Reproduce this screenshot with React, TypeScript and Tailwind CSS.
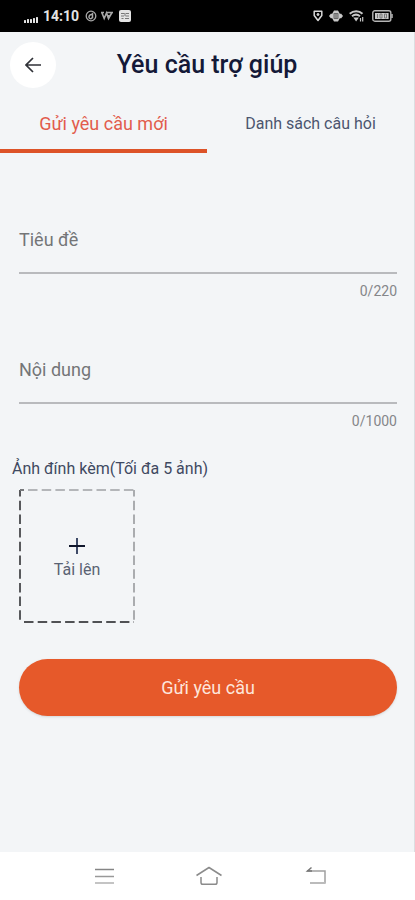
import React, { useState } from 'react';

interface CounterFieldProps {
  id: string;
  label: string;
  max: number;
}

function StatusBar() {
  return (
    <div className="flex h-8 items-center justify-between bg-black pl-[23px] pr-[22px] text-[#e4e4e4]">
      <div className="flex items-center">
        <svg className="mr-1 h-4 w-4" viewBox="0 0 16 16" fill="currentColor" aria-hidden="true">
          <rect x="1" y="12" width="2" height="3" rx=".5" />
          <rect x="4" y="11" width="2" height="4" rx=".5" />
          <rect x="7" y="11" width="2" height="4" rx=".5" />
          <rect x="10" y="10" width="2" height="5" rx=".5" />
          <rect x="13" y="9" width="2" height="6" rx=".5" />
        </svg>
        <span className="text-sm font-bold leading-4">14:10</span>
        <svg className="ml-[6px] h-3 w-3" viewBox="0 0 12 12" fill="none" stroke="#a8a8a8" aria-hidden="true">
          <circle cx="6" cy="6" r="4.8" strokeWidth="1.3" />
          <path d="M7.5 2.8v5.5M7.5 4.5C4.8 4 3.8 6 4 7.5s2.8 1.6 3.3 0" strokeWidth="1.5" />
        </svg>
        <svg className="ml-1 h-3 w-3" viewBox="0 0 12 12" fill="none" stroke="#a8a8a8" strokeWidth="1.6" aria-hidden="true">
          <path d="M0 2.5h3M1 3l2.2 5.5L5.5 3l2 5.5L11 2.5M5 2.5h7M7.5 5v4" />
        </svg>
        <svg className="ml-[6px] h-3 w-3" viewBox="0 0 12 12" aria-hidden="true">
          <rect width="12" height="12" rx="2" fill="#e4e4e4" />
          <path d="M2 3.5h3.5M7 3.5h3M2 6h3M6.5 6H10M2.5 8.5h2M6 8.5h4M6 3v3" stroke="#777" fill="none" />
        </svg>
      </div>
      <div className="flex items-center">
        <svg className="mr-[6px] h-3 w-[10px]" viewBox="0 0 10 12" fill="none" stroke="#d8d8d8" aria-hidden="true">
          <path d="M1.2 1.2h7.6v4.3L5 10.5 1.2 5.5z" strokeWidth="1.5" strokeLinejoin="round" />
          <circle cx="5" cy="4.5" r="1" fill="#d8d8d8" />
        </svg>
        <svg className="mr-[6px] h-3 w-[14px]" viewBox="0 0 14 12" aria-hidden="true">
          <path d="M0 6l2-2.5 1 .5 2-3.5h4L11 4l1-.5L14 6l-2 2.5-1-.5-2 3.5H5L3 8l-1 .5z" fill="#c8c8c8" />
          <rect x="4.5" y="3" width="5" height="6" rx="1" fill="#666" />
          <path d="M5 5h4M5 7h4" stroke="#aaa" />
        </svg>
        <svg className="mr-2 h-3 w-[15px]" viewBox="0 0 15 12" fill="none" stroke="#c8c8c8" strokeWidth="2" aria-hidden="true">
          <path d="M.7 3.7C4.5.5 10 .5 13.5 3.7M3 6.2c2.5-2 5.5-2 8 0" />
          <path d="M4.3 7.5h5.6L7.1 11.5z" fill="#c8c8c8" stroke="none" />
          <path d="M11.5 8v3.5M13.7 7v4.5" strokeWidth="1.2" />
        </svg>
        <svg className="h-3 w-[21px]" viewBox="0 0 21 12" fill="none" aria-hidden="true">
          <rect x=".8" y=".8" width="18" height="10.4" rx="2" stroke="#b5b5b5" strokeWidth="1.4" />
          <rect x="3" y="3" width="13.6" height="6" fill="#c8c8c8" />
          <path d="M5.5 4v4M8 4h2v4H8zM12.5 4h2v4h-2z" stroke="#777" />
          <path d="M20 4v4" stroke="#b5b5b5" strokeWidth="1.5" />
        </svg>
      </div>
    </div>
  );
}

function CounterField({ id, label, max }: CounterFieldProps) {
  const [value, setValue] = useState('');

  return (
    <div className="flex flex-col">
      <label htmlFor={id} className="text-lg leading-6 text-[#747577]">
        {label}
      </label>
      <input
        id={id}
        type="text"
        maxLength={max}
        value={value}
        onChange={e => setValue(e.target.value)}
        className="h-[22px] w-full border-b-2 border-[#b9babd] bg-transparent text-base text-[#1c2340] outline-none"
      />
      <span className="mt-[7px] text-right text-sm leading-5 text-[#858689]">
        {value.length}/{max}
      </span>
    </div>
  );
}

function UploadBox() {
  return (
    <button type="button" className="relative mt-[10px] flex h-[134px] w-[116px] flex-col items-center justify-center pt-2">
      {/* Dashed outline */}
      <svg className="absolute inset-0 h-full w-full" viewBox="0 0 116 134" fill="none" strokeWidth="2" aria-hidden="true">
        <path d="M5 1h110" stroke="#b4b6b9" strokeDasharray="9.5 4.2" strokeDashoffset="-4" />
        <path d="M115 1v132" stroke="#aaacaf" strokeDasharray="9.5 4.2" strokeDashoffset="3" />
        <path d="M1 1v132" stroke="#58595c" strokeDasharray="9.5 4.2" strokeDashoffset="3" />
        <path d="M5 133h110" stroke="#505154" strokeDasharray="9.5 4.2" />
        <path d="M1 1h4" stroke="#77787b" />
      </svg>
      <svg className="h-4 w-4" viewBox="0 0 16 16" fill="none" strokeWidth="2" aria-hidden="true">
        <path d="M8 0v16" stroke="#3f4b68" />
        <path d="M0 8h16" stroke="#10172c" />
      </svg>
      <span className="mt-1 text-base leading-6 text-[#596273]">Tải lên</span>
    </button>
  );
}

function NavigationBar() {
  return (
    <nav className="flex h-12 items-center justify-between bg-white pl-[92px] pr-[88px] text-[#8b8b8b]">
      <button type="button" aria-label="Gần đây">
        <svg className="h-6 w-6" viewBox="0 0 24 24" fill="none" strokeWidth="1.5">
          <path d="M3 5.5h19" stroke="#858585" />
          <path d="M3 12.5h19" stroke="#999" />
          <path d="M3 19h19" stroke="#c4c4c4" strokeWidth="2" />
        </svg>
      </button>
      <button type="button" aria-label="Trang chủ">
        <svg className="h-6 w-7" viewBox="0 0 28 24" fill="none" stroke="currentColor" strokeWidth="1.5" strokeLinejoin="round">
          <path d="M.5 11.5l12.5-8 12.5 8" />
          <path d="M5 13v5.5q0 1.8 1.8 1.8h12.4q1.8 0 1.8-1.8V13" />
        </svg>
      </button>
      <button type="button" aria-label="Quay lại">
        <svg className="h-6 w-6" viewBox="0 0 24 24" fill="none" strokeWidth="1.5">
          <path d="M4 7h18v12" stroke="#a0a0a0" />
          <path d="M8.5 3.5L4.5 7H9" stroke="#777" />
          <path d="M22.7 19H7" stroke="#bbb" strokeWidth="2" />
        </svg>
      </button>
    </nav>
  );
}

export default function App() {
  const [tab, setTab] = useState('new');

  return (
    <div className="flex min-h-screen flex-col bg-[#f3f5f7] font-['Roboto',sans-serif]">
      <StatusBar />

      <div className="flex flex-1 flex-col border-r border-[#dcdee1]">
        {/* Header */}
        <header className="grid h-[66px] grid-cols-[46px_1fr_46px] items-center px-[10px]">
          <button type="button" aria-label="Trở về" className="flex h-[46px] w-[46px] items-center justify-center rounded-full bg-white">
            <svg className="h-4 w-4" viewBox="0 0 16 16" fill="none" stroke="#303238" strokeWidth="1.7" aria-hidden="true">
              <path d="M16 8H1.5M8 1L1 8l7 7" />
            </svg>
          </button>
          <h1 className="text-center text-[25px] font-medium leading-8 text-[#141938]">Yêu cầu trợ giúp</h1>
        </header>

        {/* Tabs */}
        <div role="tablist" className="grid h-[55px] grid-cols-2">
          <button
            type="button"
            role="tab"
            aria-selected={tab === 'new'}
            onClick={() => setTab('new')}
            className={`border-b-4 ${tab === 'new' ? 'border-[#dd5328] text-lg text-[#e25c4c]' : 'border-transparent text-base text-[#4c556f]'}`}
          >
            Gửi yêu cầu mới
          </button>
          <button
            type="button"
            role="tab"
            aria-selected={tab === 'list'}
            onClick={() => setTab('list')}
            className={`border-b-4 ${tab === 'list' ? 'border-[#dd5328] text-lg text-[#e25c4c]' : 'border-transparent text-base text-[#4c556f]'}`}
          >
            Danh sách câu hỏi
          </button>
        </div>

        {/* Form */}
        <form className="flex flex-col pl-[19px] pr-[17px] pt-[75px]" onSubmit={e => e.preventDefault()}>
          <div className="flex flex-col gap-[57px]">
            <CounterField id="title" label="Tiêu đề" max={220} />
            <CounterField id="content" label="Nội dung" max={1000} />
          </div>

          <p className="-ml-[7px] mt-7 text-base leading-5 text-[#3f4961]">Ảnh đính kèm(Tối đa 5 ảnh)</p>
          <UploadBox />

          <button
            type="submit"
            className="mt-9 h-[57px] rounded-full bg-[#e6592a] text-lg text-[#fde6dc] shadow-sm"
          >
            Gửi yêu cầu
          </button>
        </form>
      </div>

      <NavigationBar />
    </div>
  );
}
